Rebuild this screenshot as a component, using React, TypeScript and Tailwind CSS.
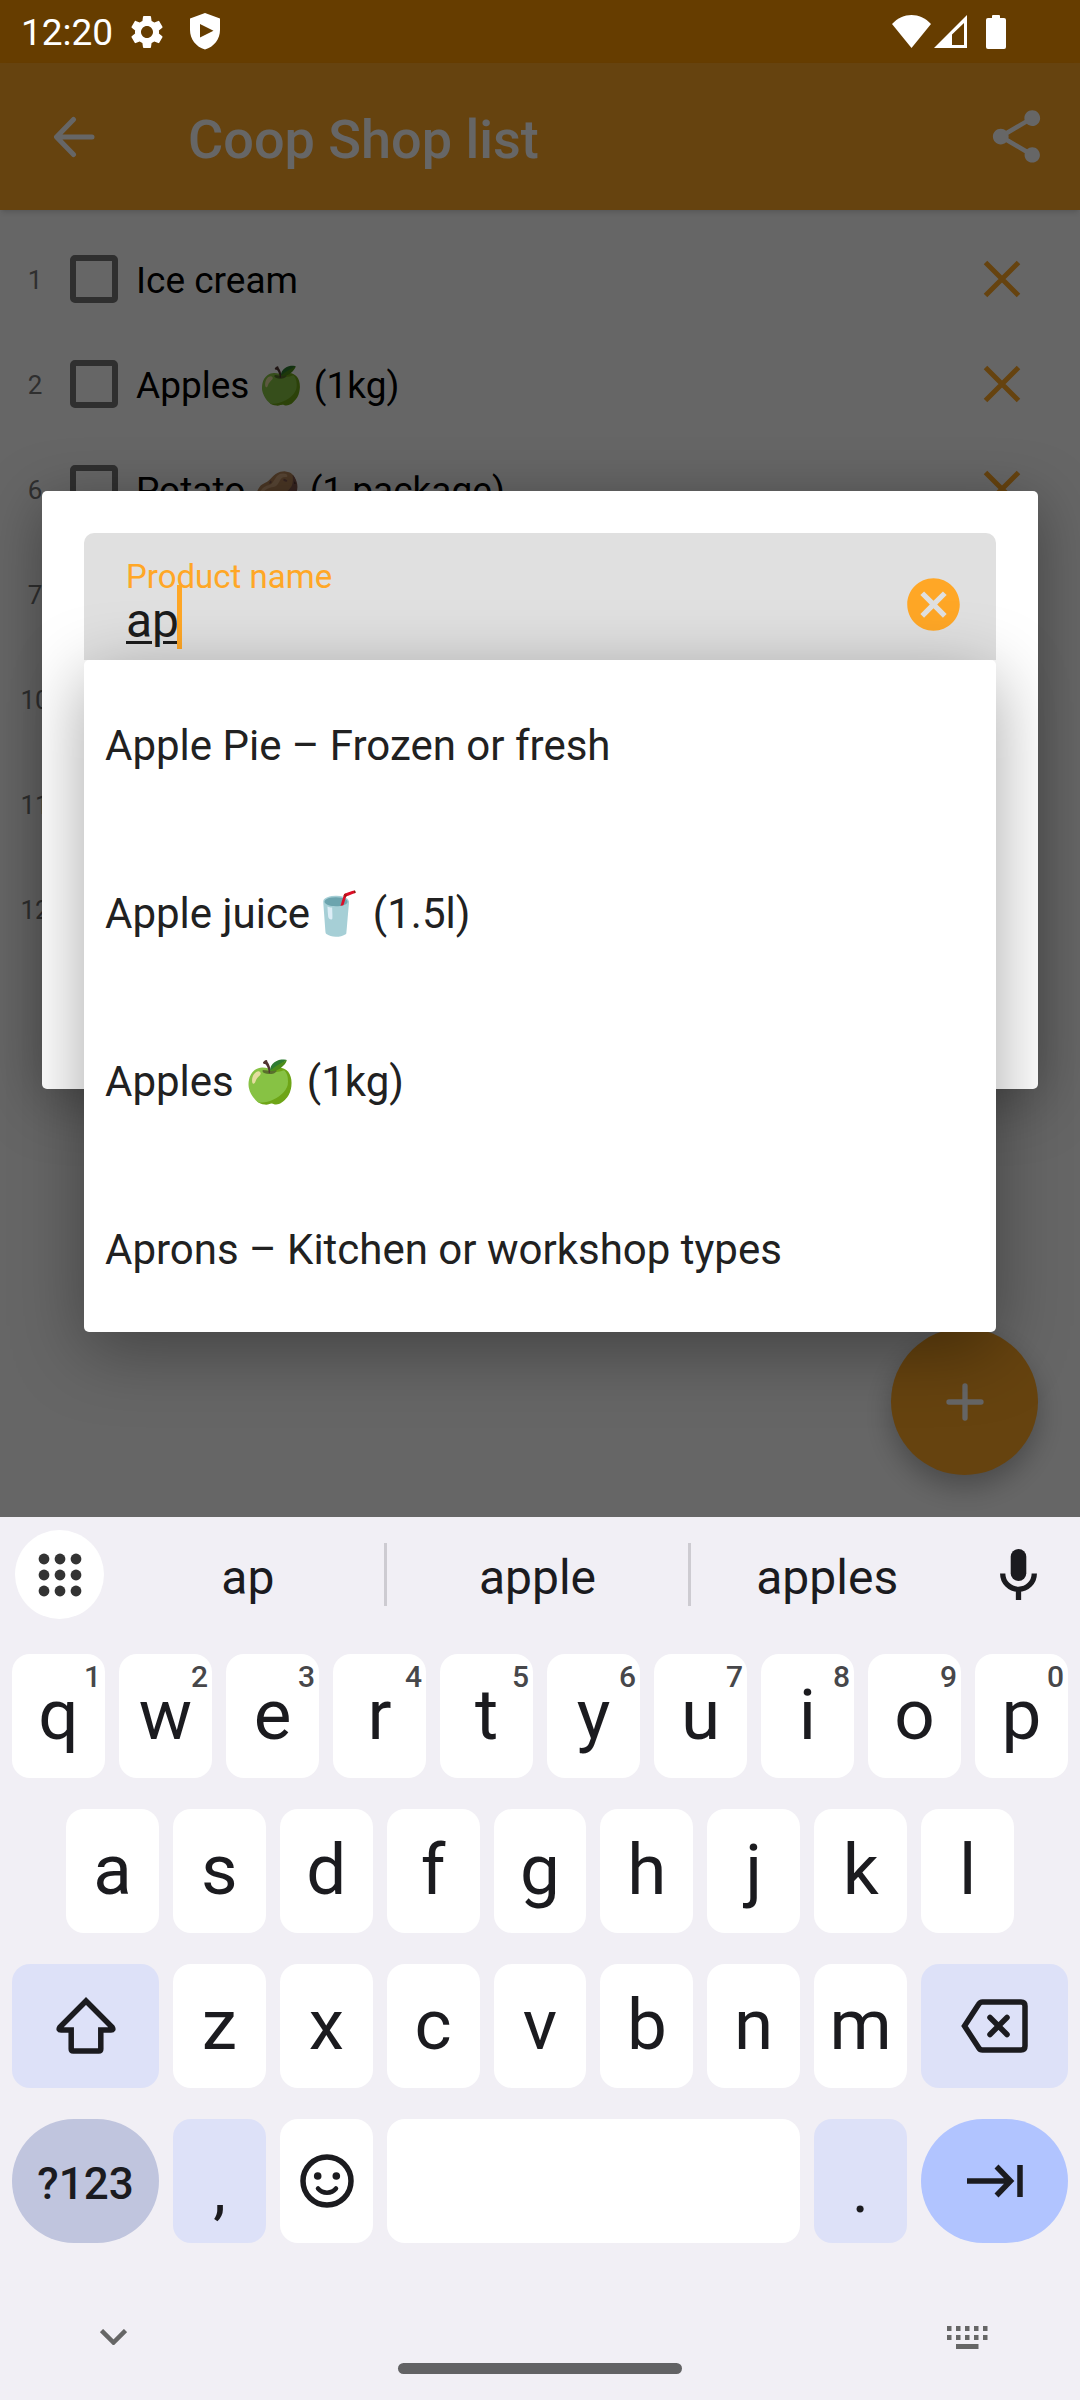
import React from 'react';
import { MdCancel, MdSettings, MdShare } from 'react-icons/md';

type Item = { id: number; name: string };

const ITEMS: Item[] = [
  { id: 1, name: 'Ice cream' },
  { id: 2, name: 'Apples 🍏 (1kg)' },
  { id: 6, name: 'Potato 🥔 (1 package)' },
  { id: 7, name: '' },
  { id: 10, name: '' },
  { id: 11, name: '' },
  { id: 12, name: '' },
];

const OPTIONS = [
  'Apple Pie – Frozen or fresh',
  'Apple juice🥤 (1.5l)',
  'Apples 🍏 (1kg)',
  'Aprons – Kitchen or workshop types',
];

const TOP_ROW = ['q', 'w', 'e', 'r', 't', 'y', 'u', 'i', 'o', 'p'];
const HOME_ROW = ['a', 's', 'd', 'f', 'g', 'h', 'j', 'k', 'l'];
const BOTTOM_ROW = ['z', 'x', 'c', 'v', 'b', 'n', 'm'];

function StatusBar() {
  return (
    <div className="relative z-10 flex h-[63px] items-center justify-between pl-[21px] pr-[74px] text-white">
      <div className="flex items-center">
        <span className="pt-[2px] text-[37px] leading-none">12:20</span>
        <MdSettings className="ml-[14px] size-10" />
        <svg className="ml-[23px] h-[37px] w-[30px]" viewBox="0 0 30 37" fill="currentColor" fillRule="evenodd">
          <path d="M15 0 30 5.500V17c0 9-6 17-15 19.500C6 34 0 26 0 17V5.500ZM10 11v13.500l13.500-6.700Z" />
        </svg>
      </div>
      <div className="flex items-center">
        <svg className="h-[33px] w-[39px]" viewBox="0 0 39 33" fill="currentColor">
          <path d="M0 9C11-3 28-3 39 9L19.500 33Z" />
        </svg>
        <svg className="ml-[3px] size-[33px]" viewBox="0 0 33 33" fill="currentColor" fillRule="evenodd">
          <path d="M0 33 33 0V33ZM18 19.500V30H30V8Z" />
        </svg>
        <svg className="ml-[19px] h-[34px] w-5" viewBox="0 0 20 34" fill="currentColor">
          <rect x="6" width="8" height="6" rx="1" />
          <rect y="3" width="20" height="31" rx="2" />
        </svg>
      </div>
    </div>
  );
}

function AppBar() {
  return (
    <header className="relative flex h-[147px] items-center bg-[#ffa726] pl-[53px] pr-8 text-white shadow-md">
      <button aria-label="Back">
        <svg className="size-[42px]" viewBox="0 0 42 42" fill="none" stroke="currentColor" strokeWidth="5" strokeLinecap="round" strokeLinejoin="round">
          <path d="M39 21H4M20.500 3.500 3.500 21l17 17.500" />
        </svg>
      </button>
      <h1 className="ml-[93px] flex-1 pt-[6px] text-[54px] font-medium leading-none">Coop Shop list</h1>
      <button aria-label="Share">
        <MdShare className="size-[63px]" />
      </button>
    </header>
  );
}

function ShoppingList() {
  return (
    <ul className="pt-4">
      {ITEMS.map((item) => (
        <li key={item.id} className="flex h-[105px] items-center pr-[59px]">
          <span className="w-[70px] pt-[3px] text-center text-[26px] text-[#757575]">{item.id}</span>
          <input
            id={`item-${item.id}`}
            type="checkbox"
            aria-label={`Item ${item.id}`}
            className="size-12 appearance-none rounded-[5px] border-[6px] border-[#757575]"
          />
          <label htmlFor={`item-${item.id}`} className="ml-[18px] flex-1 pt-1 text-[37px] leading-none text-black">
            {item.name}
          </label>
          <button aria-label={`Remove item ${item.id}`} className="text-[#ffa726]">
            <svg className="size-[38px]" viewBox="0 0 38 38" fill="none" stroke="currentColor" strokeWidth="5">
              <path d="m2.500 2.500 33 33m0-33-33 33" />
            </svg>
          </button>
        </li>
      ))}
    </ul>
  );
}

function ProductDialog() {
  return (
    <div className="absolute inset-x-0 bottom-0 top-[63px] flex items-center px-[42px]">
      <div role="dialog" aria-label="Add product" className="min-h-[598px] w-full rounded-[5px] bg-white p-[42px] shadow-[0_12px_60px_rgba(0,0,0,0.35)]">
        <div className="relative flex h-[127px] items-center justify-between rounded-t-[10px] bg-[#e0e0e0] pl-[42px] pr-[31px] pt-[15px]">
          <div className="relative flex-1">
            <label htmlFor="product" className="block pt-[2px] text-[33px] leading-8 text-[#ffa726]">
              Product name
            </label>
            <input
              id="product"
              defaultValue="ap"
              autoComplete="off"
              className="block h-14 w-full bg-transparent text-[48px] leading-[56px] text-[#1c1c1c] underline decoration-[3px] underline-offset-4 outline-none"
            />
            <span className="absolute bottom-0 left-[51px] h-16 w-[5px] bg-[#ffa726]" />
          </div>
          <button aria-label="Clear" className="text-[#ffa726]">
            <MdCancel className="size-[63px]" />
          </button>
          <ul role="listbox" className="absolute inset-x-0 top-full rounded-[5px] bg-white shadow-[0_18px_70px_rgba(0,0,0,0.35)]">
            {OPTIONS.map((option) => (
              <li key={option} role="option" aria-selected="false" className="flex h-[168px] items-center px-[21px] pt-1 text-[42px] leading-none text-[#212121]">
                {option}
              </li>
            ))}
          </ul>
        </div>
      </div>
    </div>
  );
}

const KEY = 'flex h-[124px] items-center justify-center rounded-[18px] text-[#1b1b1f]';

function LetterKey({ char, hint }: { char: string; hint?: string }) {
  return (
    <button className={`${KEY} relative flex-1 bg-white pb-1 text-[71px] leading-none`}>
      {char}
      {hint && <span className="absolute right-1 top-2 text-[30px] font-medium leading-none text-[#47474a]">{hint}</span>}
    </button>
  );
}

function Suggestions() {
  return (
    <div className="flex h-[115px] items-center pl-[15px]">
      <button aria-label="More tools" className="flex size-[89px] items-center justify-center rounded-full bg-white">
        <svg className="size-11" viewBox="0 0 44 44" fill="#333">
          {[6, 22, 38].map((y) => [6, 22, 38].map((x) => <circle key={`${x}-${y}`} cx={x} cy={y} r="5.400" />))}
        </svg>
      </button>
      <div className="ml-2 flex h-[63px] flex-1 text-[48px] leading-none text-[#1b1b1f]">
        <button className="flex-[9] border-r-[3px] border-[#cdcbd1] pt-[6px]">ap</button>
        <button className="flex-[10] border-r-[3px] border-[#cdcbd1] pt-[6px]">apple</button>
        <button className="flex-[9] pt-[6px]">apples</button>
      </div>
      <button aria-label="Voice input" className="flex w-[117px] pl-[37px] text-[#1b1b1f]">
        <svg className="h-[51px] w-[37px]" viewBox="0 0 37 51" fill="none" stroke="currentColor" strokeWidth="5.300">
          <rect x="10.700" width="15.600" height="32" rx="7.800" fill="currentColor" stroke="none" />
          <path d="M2.700 24.500a15.800 15.800 0 0 0 31.600 0M18.500 40v11" />
        </svg>
      </button>
    </div>
  );
}

function Keyboard() {
  return (
    <section aria-label="Keyboard" className="relative bg-[#f1eff5]">
      <Suggestions />
      <div className="mt-[22px] flex flex-col gap-[31px] px-3">
        <div className="flex gap-[14px]">
          {TOP_ROW.map((c, i) => (
            <LetterKey key={c} char={c} hint={String((i + 1) % 10)} />
          ))}
        </div>
        <div className="flex gap-[14px] px-[54px]">
          {HOME_ROW.map((c) => (
            <LetterKey key={c} char={c} />
          ))}
        </div>
        <div className="flex gap-[14px]">
          <button aria-label="Shift" className={`${KEY} w-[147px] bg-[#dde1f8]`}>
            <svg className="h-[58px] w-[60px]" viewBox="0 0 60 58" fill="none" stroke="currentColor" strokeWidth="5.500">
              <path d="M30 4 3.800 30.300Q2 33 5 33H15.200V52q0 2 2 2H42.800q2 0 2-2V33H55q3 0 1.200-2.700Z" />
            </svg>
          </button>
          {BOTTOM_ROW.map((c) => (
            <LetterKey key={c} char={c} />
          ))}
          <button aria-label="Backspace" className={`${KEY} w-[147px] bg-[#dde1f8]`}>
            <svg className="h-[54px] w-[67px]" viewBox="0 0 67 54" fill="none" stroke="currentColor" strokeWidth="5.500" strokeLinecap="round">
              <path d="M3.500 27 17.500 5.500Q19 3 21.500 3H60q4 0 4 4V47q0 4-4 4H21.500Q19 51 17.500 48.500Z" />
              <path d="m29 18.500 17 17m0-17-17 17" />
            </svg>
          </button>
        </div>
        <div className="flex gap-[14px]">
          <button className="flex h-[124px] w-[147px] items-center justify-center rounded-full bg-[#c0c5de] pt-[6px] text-[44px] font-medium leading-none text-[#1b1b1f]">
            ?123
          </button>
          <button className={`${KEY} w-[93px] bg-[#dde1f8] pt-5 text-[64px] leading-none`}>,</button>
          <button aria-label="Emoji" className={`${KEY} w-[93px] bg-white`}>
            <svg className="size-[54px]" viewBox="0 0 54 54" fill="none" stroke="currentColor" strokeWidth="5.500">
              <circle cx="27" cy="27" r="24" />
              <circle cx="17.700" cy="22" r="3.800" fill="currentColor" stroke="none" />
              <circle cx="36.300" cy="22" r="3.800" fill="currentColor" stroke="none" />
              <path d="M18 34.500c4.500 5.500 13.500 5.500 18 0" strokeWidth="4.500" strokeLinecap="round" />
            </svg>
          </button>
          <button aria-label="Space" className={`${KEY} flex-1 bg-white`} />
          <button className={`${KEY} w-[93px] bg-[#dde1f8] pt-5 text-[64px] leading-none`}>.</button>
          <button aria-label="Next field" className="flex h-[124px] w-[147px] items-center justify-center rounded-full bg-[#b1c4ff] text-[#1b1b1f]">
            <svg className="h-[34px] w-14" viewBox="0 0 56 34" fill="none" stroke="currentColor" strokeWidth="5.500">
              <path d="M0 17H43M29.500 2.500 43.500 17l-14 14.500M53 1V33" />
            </svg>
          </button>
        </div>
      </div>
      <div className="flex items-center justify-between pl-[93px] pr-[91px] pt-[74px] text-[#666]">
        <button aria-label="Hide keyboard" className="flex size-10 items-center justify-center">
          <svg className="h-4 w-[27px]" viewBox="0 0 27 16" fill="none" stroke="currentColor" strokeWidth="4.500">
            <path d="M1.500 1.500 13.500 13.500l12-12" />
          </svg>
        </button>
        <button aria-label="Change keyboard">
          <svg className="h-[23px] w-[42px]" viewBox="0 0 42 23" fill="currentColor">
            {[0, 9, 18, 27, 36].map((x) => (
              <path key={x} d={`M${x} 0h4.500v5H${x}ZM${x} 9h4.500v5H${x}Z`} />
            ))}
            <path d="M9 18H31.500V23H9Z" />
          </svg>
        </button>
      </div>
      <div className="pb-[26px] pt-[6px]">
        <div className="mx-auto h-[11px] w-[284px] rounded-full bg-[#626264]" />
      </div>
    </section>
  );
}

export default function App() {
  return (
    <div className="flex min-h-screen flex-col bg-white font-['Roboto','Noto_Color_Emoji',sans-serif]">
      <main className="relative flex-1">
        <div className="bg-[#663d00]">
          <StatusBar />
        </div>
        <AppBar />
        <ShoppingList />
        <button aria-label="Add item" className="absolute bottom-[42px] right-[42px] flex size-[147px] items-center justify-center rounded-full bg-[#ffa726] text-white shadow-[0_12px_28px_rgba(0,0,0,0.28)]">
          <svg className="size-[38px]" viewBox="0 0 38 38" fill="none" stroke="currentColor" strokeWidth="5.300" strokeLinecap="round">
            <path d="M19 3V35M3 19H35" />
          </svg>
        </button>
        <div className="absolute inset-x-0 bottom-0 top-[63px] bg-black/60" />
        <ProductDialog />
      </main>
      <Keyboard />
    </div>
  );
}
